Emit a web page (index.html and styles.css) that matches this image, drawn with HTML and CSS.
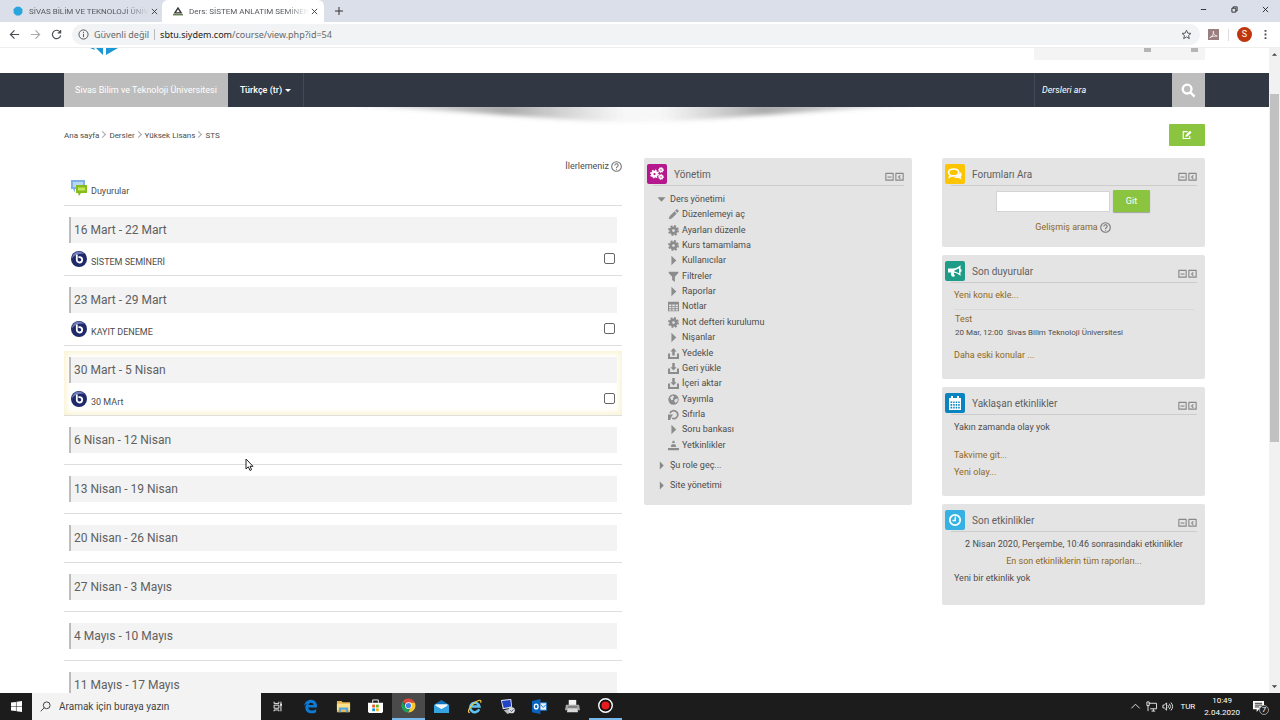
FILE: index.html
```html
<!DOCTYPE html>
<html lang="tr">
<head>
  <meta charset="UTF-8" />
  <meta name="viewport" content="width=device-width, initial-scale=1.0" />
  <title>Ders: SİSTEM ANLATIM SEMİNERİ</title>
  <link rel="stylesheet" href="styles.css">
</head>

<body>
<!-- Shared icons -->
<svg class="sprite" aria-hidden="true">
  <symbol id="i-gear" viewBox="0 0 16 16">
    <circle cx="8" cy="8" r="4" fill="none" stroke="currentColor" stroke-width="4"/>
    <circle cx="8" cy="8" r="6.6" fill="none" stroke="currentColor" stroke-width="2.6" stroke-dasharray="2.8 2.384"/>
  </symbol>
  <symbol id="i-pencil" viewBox="0 0 16 16"><path fill="currentColor" d="M1 15l1.300-4.500L9.500 3.300l3.200 3.200L5.500 13.700zM10.400 2.400L12 .8c.5-.5 1.200-.5 1.700 0L15.200 2.300c.5.5.5 1.200 0 1.700l-1.600 1.600z"/></symbol>
  <symbol id="i-right" viewBox="0 0 16 16"><path fill="currentColor" d="M5 1v14l7-7z"/></symbol>
  <symbol id="i-down" viewBox="0 0 16 16"><path fill="currentColor" d="M1 4h14l-7 8z"/></symbol>
  <symbol id="i-filter" viewBox="0 0 16 16"><path fill="currentColor" d="M1 1h14v2L10 8.500V16l-4-3V8.500L1 3z"/></symbol>
  <symbol id="i-table" viewBox="0 0 16 16"><path fill="currentColor" fill-rule="evenodd" d="M0 1h16v14H0zM1.500 5v2.300H5V5zm4.700 0v2.300h3.600V5zM11 5v2.300h3.500V5zM1.500 8.500v2.200H5V8.500zm4.700 0v2.200h3.600V8.500zm4.800 0v2.200h3.500V8.500zM1.500 11.900v1.800H5v-1.800zm4.700 0v1.800h3.600v-1.800zm4.800 0v1.800h3.500v-1.800z"/></symbol>
  <symbol id="i-upload" viewBox="0 0 16 16"><path fill="currentColor" d="M8 0l4.500 5H9.800v6H6.200V5H3.500zM0 8h3v5h10V8h3v8H0z"/></symbol>
  <symbol id="i-download" viewBox="0 0 16 16"><path fill="currentColor" d="M8 11L3.500 6h2.700V0h3.600v6h2.700zM0 8h3v5h10V8h3v8H0z"/></symbol>
  <symbol id="i-globe" viewBox="0 0 16 16"><circle cx="8" cy="8" r="7.500" fill="currentColor"/><path fill="#e4e4e4" d="M3 5l4-3 2 2-2 2 1 2-3 1zM10 8l4-2v4l-3 3-2-3z"/></symbol>
  <symbol id="i-reset" viewBox="0 0 16 16"><path fill="none" stroke="currentColor" stroke-width="2.500" d="M3 6a5.800 5.800 0 1 1 3 7.500"/><path fill="currentColor" d="M0 8h7.500L5.500 10.500 3 16H0z"/></symbol>
  <symbol id="i-cone" viewBox="0 0 16 16"><path fill="currentColor" d="M7 1h2l1.200 3.500H5.800zM5.300 6h5.400l1.300 4H4zM0 11.500h16V15H0z"/></symbol>
  <symbol id="i-help" viewBox="0 0 16 16"><circle cx="8" cy="8" r="7" fill="none" stroke="currentColor" stroke-width="1.600"/><path d="M5.600 6.400a2.400 2.400 0 1 1 3.600 2c-.9.500-1.200.8-1.200 1.700M8 11.300v1.600" fill="none" stroke="currentColor" stroke-width="1.600"/></symbol>
  <symbol id="i-hide" viewBox="0 0 16 16"><path d="M1 2.500h14M1.500 2v12.500h13V2" fill="none" stroke="currentColor" stroke-width="2"/><path d="M4.500 9h7" stroke="currentColor" stroke-width="2"/></symbol>
  <symbol id="i-dock" viewBox="0 0 16 16"><path d="M1 2.500h14M1.500 2v12.500h13V2" fill="none" stroke="currentColor" stroke-width="2"/><path d="M9.500 6L6.500 9l3 3" fill="none" stroke="currentColor" stroke-width="2"/></symbol>
  <symbol id="i-bbb" viewBox="0 0 16 16">
    <circle cx="8" cy="8" r="8" fill="#1f2a6b"/><path fill="#6f7db8" d="M8 .6A7.400 7.400 0 0 0 .8 8C3 3.500 9 2 13.500 3.200A7.400 7.400 0 0 0 8 .6z"/>
    <path d="M5.800 3.600v5.200a2.700 2.700 0 1 0 2.700-2.700H7.400" fill="none" stroke="#fff" stroke-width="1.800"/>
  </symbol>
</svg>

<div class="browser">
  <header class="tabs">
    <div class="tab">
      <svg class="favicon" viewBox="0 0 16 16"><path fill="#27a5dc" d="M5 1h6l4 4v6l-4 4H5l-4-4V5z"/></svg>
      <span class="tab-title">SİVAS BİLİM VE TEKNOLOJİ ÜNİV</span>
      <button class="tab-close" aria-label="Kapat"><svg viewBox="0 0 8 8"><path d="M1 1l6 6M7 1L1 7"/></svg></button>
    </div>
    <div class="tab tab-active">
      <svg class="favicon" viewBox="0 0 16 16"><path fill="#333" d="M8 1l7 11H1zM8 5L5 10h6z" fill-rule="evenodd"/><path fill="#4c6b3a" d="M0 13h16v2H0z"/></svg>
      <span class="tab-title">Ders: SİSTEM ANLATIM SEMİNER</span>
      <button class="tab-close" aria-label="Kapat"><svg viewBox="0 0 8 8"><path d="M1 1l6 6M7 1L1 7"/></svg></button>
    </div>
    <button class="new-tab" aria-label="Yeni sekme"><svg viewBox="0 0 8 8"><path d="M4 0v8M0 4h8"/></svg></button>
    <div class="window-buttons">
      <button aria-label="Küçült"><svg viewBox="0 0 8 8"><path d="M1 4h6"/></svg></button>
      <button aria-label="Geri yükle"><svg viewBox="0 0 8 8"><path d="M1 2.500h4.500V7H1zM2.500 2.500V1H7v4.500H5.500"/></svg></button>
      <button aria-label="Kapat"><svg viewBox="0 0 8 8"><path d="M1 1l6 6M7 1L1 7"/></svg></button>
    </div>
  </header>

  <div class="toolbar">
    <button class="tool" aria-label="Geri"><svg viewBox="0 0 12 12"><path d="M11 6H2M6 1.500L1.500 6 6 10.500"/></svg></button>
    <button class="tool tool-off" aria-label="İleri"><svg viewBox="0 0 12 12"><path d="M1 6h9M6 1.500L10.500 6 6 10.500"/></svg></button>
    <button class="tool" aria-label="Yenile"><svg viewBox="0 0 12 12"><path d="M10 3.500A4.600 4.600 0 1 0 10.600 7M10.500 1v3.200H7.300"/></svg></button>
    <div class="address">
      <svg class="info" viewBox="0 0 12 12"><circle cx="6" cy="6" r="5"/><path d="M6 5.300v3.500M6 3v1.300"/></svg>
      <span class="insecure">Güvenli değil</span>
      <span class="url"><b>sbtu.siydem.com</b>/course/view.php?id=54</span>
      <svg class="star" viewBox="0 0 12 12"><path d="M6 1.300l1.400 3.200 3.500.3-2.700 2.300.9 3.400L6 8.700l-3.100 1.800.9-3.400L1.100 4.800l3.500-.3z"/></svg>
    </div>
    <svg class="pdf" viewBox="0 0 12 12"><path fill="#9a7f80" d="M0 0h12v12H0z"/><path d="M2 9.500C5 8 6.500 5 5.800 2.500c-.5 3 2 5 4.200 5.300C7 7.500 4 8 2 9.500z" fill="none" stroke="#f4eaea"/></svg>
    <span class="divider"></span>
    <button class="avatar">S</button>
    <button class="tool menu" aria-label="Menü"><svg viewBox="0 0 12 12"><path fill="currentColor" stroke="none" d="M5 1h2v2H5zM5 5h2v2H5zM5 9h2v2H5z"/></svg></button>
  </div>

  <div class="viewport">
    <div class="page">
      <div class="banner">
        <svg class="logo" viewBox="0 0 30 8"><path fill="#1c97d5" d="M0 0h4l1 2zM6 0h7v7zM16 0h12L16 7z"/></svg>
        <div class="login-box"><i></i><i></i></div>
      </div>

      <nav class="navbar">
        <a class="brand" href="#">Sivas Bilim ve Teknoloji Üniversitesi</a>
        <a class="lang" href="#">Türkçe (tr) <span class="caret"></span></a>
        <form class="course-search">
          <input type="text" placeholder="Dersleri ara" aria-label="Dersleri ara">
          <button type="button" aria-label="Ara"><svg viewBox="0 0 16 16"><circle cx="6.500" cy="6.500" r="4.700"/><path d="M10 10l4.500 4.500"/></svg></button>
        </form>
        <svg class="nav-shadow" viewBox="0 0 560 24" preserveAspectRatio="none">
          <defs>
            <linearGradient id="lobes">
              <stop offset="0" stop-color="#555" stop-opacity=".1"/><stop offset=".27" stop-color="#555" stop-opacity=".5"/>
              <stop offset=".48" stop-color="#777" stop-opacity=".06"/><stop offset=".55" stop-color="#777" stop-opacity=".06"/>
              <stop offset=".73" stop-color="#555" stop-opacity=".5"/><stop offset="1" stop-color="#555" stop-opacity=".1"/>
            </linearGradient>
            <filter id="soft"><feGaussianBlur stdDeviation="6 2"/></filter>
          </defs>
          <path fill="url(#lobes)" filter="url(#soft)" d="M0-4v3C90 2 180 12 280 16 380 12 470 2 560-1v-3z"/>
        </svg>
      </nav>

      <div class="crumb-row">
        <nav class="breadcrumb">
          <a href="#">Ana sayfa</a><a href="#">Dersler</a><a href="#">Yüksek Lisans</a><a href="#">STS</a>
        </nav>
        <button class="edit" aria-label="Düzenlemeyi aç"><svg viewBox="0 0 16 16"><path fill="none" stroke="#fff" stroke-width="1.800" d="M9 2.500H2v11h10.500V9.500"/><path fill="#fff" d="M5.500 11l.6-3.200 6.600-6.600 2.600 2.600-6.600 6.600z"/></svg></button>
      </div>

      <div class="columns">
        <!-- Course weeks -->
        <main class="course">
          <div class="general">
            <div class="progress">İlerlemeniz<svg class="help"><use href="#i-help"/></svg></div>
            <a class="activity" href="#">
              <svg class="activity-icon" viewBox="0 0 16 16"><path fill="#7fb0e6" d="M0 0h14v9H4v3.500L2 9H0z"/><path fill="#b9d6f5" d="M2 2h10v5H2z"/><path fill="#86bd1c" d="M5 5h11v8h-6l-2 3-1-3H5z"/><path fill="#c5e65b" d="M7 7.500h7v3H7z"/></svg>
              <span>Duyurular</span>
            </a>
          </div>

          <section class="week">
            <h3>16 Mart - 22 Mart</h3>
            <div class="activity-row">
              <a class="activity" href="#"><svg class="activity-icon"><use href="#i-bbb"/></svg><span>SİSTEM SEMİNERİ</span></a>
              <input type="checkbox" aria-label="SİSTEM SEMİNERİ tamamlandı">
            </div>
          </section>
          <section class="week">
            <h3>23 Mart - 29 Mart</h3>
            <div class="activity-row">
              <a class="activity" href="#"><svg class="activity-icon"><use href="#i-bbb"/></svg><span>KAYIT DENEME</span></a>
              <input type="checkbox" aria-label="KAYIT DENEME tamamlandı">
            </div>
          </section>
          <section class="week week-current">
            <h3>30 Mart - 5 Nisan</h3>
            <div class="activity-row">
              <a class="activity" href="#"><svg class="activity-icon"><use href="#i-bbb"/></svg><span>30 MArt</span></a>
              <input type="checkbox" aria-label="30 MArt tamamlandı">
            </div>
          </section>
          <section class="week week-empty"><h3>6 Nisan - 12 Nisan</h3></section>
          <section class="week week-empty"><h3>13 Nisan - 19 Nisan</h3></section>
          <section class="week week-empty"><h3>20 Nisan - 26 Nisan</h3></section>
          <section class="week week-empty"><h3>27 Nisan - 3 Mayıs</h3></section>
          <section class="week week-empty"><h3>4 Mayıs - 10 Mayıs</h3></section>
          <section class="week week-empty"><h3>11 Mayıs - 17 Mayıs</h3></section>
        </main>

        <!-- Administration -->
        <aside class="side">
          <section class="block block-admin">
            <header class="block-head">
              <svg class="badge magenta" viewBox="0 0 20 20"><g color="#fff"><use href="#i-gear" x="3" y="5" width="9" height="10"/><use href="#i-gear" x="11" y="3" width="6" height="6"/><use href="#i-gear" x="11" y="10" width="6" height="6"/></g></svg>
              <h2>Yönetim</h2>
              <button aria-label="Gizle"><svg><use href="#i-hide"/></svg></button><button aria-label="Yerleştir"><svg><use href="#i-dock"/></svg></button>
            </header>
            <div class="node"><svg><use href="#i-down"/></svg>Ders yönetimi</div>
            <ul class="tree">
              <li><svg><use href="#i-pencil"/></svg><a href="#">Düzenlemeyi aç</a></li>
              <li><svg><use href="#i-gear"/></svg><a href="#">Ayarları düzenle</a></li>
              <li><svg><use href="#i-gear"/></svg><a href="#">Kurs tamamlama</a></li>
              <li><svg><use href="#i-right"/></svg><a href="#">Kullanıcılar</a></li>
              <li><svg><use href="#i-filter"/></svg><a href="#">Filtreler</a></li>
              <li><svg><use href="#i-right"/></svg><a href="#">Raporlar</a></li>
              <li><svg><use href="#i-table"/></svg><a href="#">Notlar</a></li>
              <li><svg><use href="#i-gear"/></svg><a href="#">Not defteri kurulumu</a></li>
              <li><svg><use href="#i-right"/></svg><a href="#">Nişanlar</a></li>
              <li><svg><use href="#i-upload"/></svg><a href="#">Yedekle</a></li>
              <li><svg><use href="#i-download"/></svg><a href="#">Geri yükle</a></li>
              <li><svg><use href="#i-download"/></svg><a href="#">İçeri aktar</a></li>
              <li><svg><use href="#i-globe"/></svg><a href="#">Yayımla</a></li>
              <li><svg><use href="#i-reset"/></svg><a href="#">Sıfırla</a></li>
              <li><svg><use href="#i-right"/></svg><a href="#">Soru bankası</a></li>
              <li><svg><use href="#i-cone"/></svg><a href="#">Yetkinlikler</a></li>
            </ul>
            <div class="node"><svg><use href="#i-right"/></svg>Şu role geç...</div>
            <div class="node"><svg><use href="#i-right"/></svg>Site yönetimi</div>
          </section>
        </aside>

        <!-- Forum, news and events -->
        <aside class="side">
          <section class="block block-search">
            <header class="block-head">
              <svg class="badge yellow" viewBox="0 0 20 20"><path fill="none" stroke="#fff" stroke-width="1.600" d="M8.500 5C5.500 5 3.500 6.500 3.500 8.500c0 1.200.7 2 1.700 2.700L4.500 13l2.700-1.200c4 .5 6.500-1 6.500-3.300S11.500 5 8.500 5z"/><path fill="#fff" d="M14.800 8c2 .8 2.700 3.500.7 5l1.200 2.500-3.200-1.500c-2 .3-4-.2-5-1.200 3.500 0 6.300-1.800 6.300-4.800z"/></svg>
              <h2>Forumları Ara</h2>
              <button aria-label="Gizle"><svg><use href="#i-hide"/></svg></button><button aria-label="Yerleştir"><svg><use href="#i-dock"/></svg></button>
            </header>
            <form class="forum-search">
              <input type="text" aria-label="Forumlarda ara">
              <button type="button">Git</button>
            </form>
            <p class="advanced"><a href="#">Gelişmiş arama</a><svg class="help"><use href="#i-help"/></svg></p>
          </section>

          <section class="block">
            <header class="block-head">
              <svg class="badge teal" viewBox="0 0 20 20"><path fill="#fff" fill-rule="evenodd" d="M3 7.500h5c3 0 5.500-1.500 7.500-3.500v4c1.500 0 1.500 3 0 3v4c-2-2-4-3-6.500-3.300-.5 1 .5 2 1 3.300-1 1-2.800.8-3.500 0-.6-1.200-.8-2.300-.5-3.500H3zM14 7.200c-1.500 1-3 1.800-4.500 2v1.300c1.500.3 3 .8 4.500 1.800z"/></svg>
              <h2>Son duyurular</h2>
              <button aria-label="Gizle"><svg><use href="#i-hide"/></svg></button><button aria-label="Yerleştir"><svg><use href="#i-dock"/></svg></button>
            </header>
            <div class="block-body">
              <p><a href="#">Yeni konu ekle...</a></p>
              <div class="post">
                <a href="#">Test</a>
                <div class="post-info"><span>20 Mar, 12:00</span><span>Sivas Bilim Teknoloji Üniversitesi</span></div>
              </div>
              <p class="older"><a href="#">Daha eski konular ...</a></p>
            </div>
          </section>

          <section class="block">
            <header class="block-head">
              <svg class="badge blue" viewBox="0 0 20 20"><path fill="#fff" fill-rule="evenodd" d="M4 5h2V3h2v2h4V3h2v2h2v12H4zM5.500 8.500v1.600h1.700V8.500zm2.700 0v1.600h1.500V8.500zm2.500 0v1.600h1.500V8.500zm2.500 0v1.600h1.500V8.500zM5.500 11v1.700h1.700V11zm2.700 0v1.700h1.500V11zm2.500 0v1.700h1.500V11zm2.500 0v1.700h1.500V11zM5.500 13.700v1.700h1.700v-1.700zm2.700 0v1.700h1.500v-1.700zm2.500 0v1.700h1.500v-1.700zm2.500 0v1.700h1.500v-1.700z"/></svg>
              <h2>Yaklaşan etkinlikler</h2>
              <button aria-label="Gizle"><svg><use href="#i-hide"/></svg></button><button aria-label="Yerleştir"><svg><use href="#i-dock"/></svg></button>
            </header>
            <div class="block-body">
              <p>Yakın zamanda olay yok</p>
              <p class="calendar"><a href="#">Takvime git...</a></p>
              <p><a href="#">Yeni olay...</a></p>
            </div>
          </section>

          <section class="block block-recent">
            <header class="block-head">
              <svg class="badge sky" viewBox="0 0 20 20"><circle cx="10" cy="10" r="5.200" fill="none" stroke="#fff" stroke-width="1.800"/><path d="M10.300 6.500V10.500H7.500" fill="none" stroke="#fff" stroke-width="1.400"/></svg>
              <h2>Son etkinlikler</h2>
              <button aria-label="Gizle"><svg><use href="#i-hide"/></svg></button><button aria-label="Yerleştir"><svg><use href="#i-dock"/></svg></button>
            </header>
            <div class="block-body">
              <p class="centered">2 Nisan 2020, Perşembe, 10:46 sonrasındaki etkinlikler</p>
              <p class="centered"><a href="#">En son etkinliklerin tüm raporları...</a></p>
              <p>Yeni bir etkinlik yok</p>
            </div>
          </section>
        </aside>
      </div>
    </div>

    <div class="scrollbar">
      <svg viewBox="0 0 8 8"><path d="M1 6l3-3 3 3z"/></svg>
      <div class="track"><div class="thumb"></div></div>
      <svg viewBox="0 0 8 8"><path d="M1 2l3 3 3-3z"/></svg>
    </div>
  </div>
</div>

<footer class="taskbar">
  <button class="start" aria-label="Başlat"><svg viewBox="0 0 12 12"><path fill="#fff" d="M0 1.700L5.400 1v4.700H0zM6 .9L12 0v5.700H6zM0 6.300h5.400V11L0 10.300zM6 6.300h6V12l-6-.9z"/></svg></button>
  <label class="task-search">
    <svg viewBox="0 0 12 12"><circle cx="7.300" cy="4.700" r="3.700"/><path d="M4.700 7.300L.8 11.200"/></svg>
    <input type="text" placeholder="Aramak için buraya yazın">
  </label>
  <div class="apps">
    <button aria-label="Görev görünümü"><svg viewBox="0 0 16 16"><path fill="none" stroke="#eee" stroke-width="1.400" d="M3 1v2.500h7V1M3 6h7v4.500H3zM3 15v-2h7v2M13 1v14"/><path fill="#eee" d="M12 4h2.500v3H12z"/></svg></button>
    <button aria-label="Edge"><svg viewBox="0 0 16 16"><path fill="#0d7bd6" d="M1 7.500C2 3 5 .8 8.500.8c4.200 0 6.700 3 6.500 8.200H5.500c.2 3.500 5 4.300 8.500 2v3c-4.500 2.500-11.500 1.500-11.500-5 0-2 1-3.500 2.500-4.500-1.500.5-3 1.500-4 3zM5.800 6.500h5.400C11.200 3 6.200 3 5.800 6.500z"/></svg></button>
    <button aria-label="Dosya Gezgini"><svg viewBox="0 0 16 16"><path fill="#e8b64c" d="M1 2h5l1 1.500h8V14H1z"/><path fill="#fbe08e" d="M1 5h14v7H1z"/><path fill="#59a5d8" d="M3 9h10v5h-2.500v-2.500h-5V14H3z"/></svg></button>
    <button aria-label="Store"><svg viewBox="0 0 16 16"><path fill="none" stroke="#fff" d="M5 4V1h6v3"/><path fill="#fff" d="M0 4h16v9l-1 2H1l-1-2z"/><path fill="#e8532b" d="M4.500 6h3v3h-3z"/><path fill="#6eb11b" d="M8.500 6h3v3h-3z"/><path fill="#1296dc" d="M4.500 10h3v3h-3z"/><path fill="#f6b21b" d="M8.500 10h3v3h-3z"/></svg></button>
    <button class="running current" aria-label="Chrome"><svg viewBox="0 0 16 16"><path fill="#dd4a3c" d="M8 8L1.500 4A7.500 7.500 0 0 1 14.800 5z"/><path fill="#f9c930" d="M8 5h6.800A7.500 7.500 0 0 1 7.500 15.500L11 9z"/><path fill="#1f9f5c" d="M1.500 4L5 9.500 9 11l-1.500 4.500A7.500 7.500 0 0 1 1.500 4z"/><circle cx="8" cy="8" r="3.600" fill="#fff"/><circle cx="8" cy="8" r="2.800" fill="#4583ea"/></svg></button>
    <button aria-label="Posta"><svg viewBox="0 0 16 16"><path fill="#1273bd" d="M0 6l8-5 8 5v9H0z"/><path fill="#f4f8fb" d="M1.500 5.500h13V8L8 11 1.500 8z"/><path fill="#34a3e4" d="M0 6l8 5 8-5v9H0z"/></svg></button>
    <button aria-label="Internet Explorer"><svg viewBox="0 0 16 16"><path fill="none" stroke="#5fc4f2" stroke-width="2.600" d="M13 11A5 5 0 1 1 13.300 8H4"/><path fill="none" stroke="#f2c443" stroke-width="1.300" d="M3 14.500c-4 0 1-8 6.500-11.500C13 .8 15.800.6 14.500 4"/></svg></button>
    <button aria-label="Uzak Masaüstü"><svg viewBox="0 0 16 16"><path fill="#dce4f2" d="M1 1l11-1 1 9-10 2z"/><path fill="#2443c4" d="M2 2l9-1 1 7-8 1.500z"/><path fill="#b9bec4" d="M4 12l8-2 3 3-7 3z"/><circle cx="12.500" cy="12" r="3.300" fill="#d9dde0"/><path d="M11 12l1.300 1.400L14.300 11" fill="none" stroke="#557"/></svg></button>
    <button aria-label="Outlook"><svg viewBox="0 0 16 16"><path fill="#e8f1fa" stroke="#1573c8" d="M8 4h7.500v8H8z"/><path d="M9 6l3 3 3-3" fill="none" stroke="#1573c8"/><path fill="#0a64bd" d="M0 2l9-2v16l-9-2z"/><ellipse cx="4.500" cy="8" rx="2" ry="2.600" fill="none" stroke="#fff" stroke-width="1.400"/></svg></button>
    <button aria-label="Yazıcı"><svg viewBox="0 0 16 16"><path fill="#f3f3f3" d="M4 1h8v6H4z"/><path fill="#a8a8a8" d="M1 6h14l1 6H0z"/><path fill="#d8d8d8" d="M3 10h10l1 4H2z"/><path fill="#555" d="M3 8h10v1H3z"/></svg></button>
    <button class="running" aria-label="Kayıt"><svg viewBox="0 0 16 16"><circle cx="8" cy="8" r="7.200" fill="#111" stroke="#fff" stroke-width="1.500"/><circle cx="8" cy="8" r="4.300" fill="#e81c1c"/></svg></button>
  </div>
  <div class="tray">
    <svg viewBox="0 0 12 12"><path d="M1.500 8L6 3.500 10.500 8"/></svg>
    <svg viewBox="0 0 12 12"><path d="M3 2.500h8.500v6H4.500M1 1v4h2.500V1zM2.200 5v6M6 11h4M8 8.500V11"/></svg>
    <svg viewBox="0 0 12 12"><path d="M1 4.500h1.500L5 2v8L2.500 7.500H1zM6.500 4.500a2.500 2.500 0 0 1 0 3M8 3a4.500 4.500 0 0 1 0 6M9.700 1.700a6.500 6.500 0 0 1 0 8.600"/></svg>
    <span class="keyboard">TUR</span>
    <time class="clock">10:49<br>2.04.2020</time>
    <button class="notifications" aria-label="Bildirimler">
      <svg viewBox="0 0 12 12"><path fill="#fff" stroke="none" d="M0 0h12v9H6.500L4 12V9H0z"/><path stroke="#222" d="M2 2.500h8M2 4.500h8M2 6.500h5"/></svg>
      <span>7</span>
    </button>
  </div>
</footer>

<svg class="cursor" viewBox="0 0 9 14"><path d="M1 1v10l2.300-2.200L5 12.500l1.600-.8L5 8.300h3z" fill="#fff" stroke="#222"/></svg>
</body>
</html>
```
FILE: styles.css
```css
* {
  box-sizing: border-box;
}

body {
  margin: 0;
  height: 100vh;
  display: flex;
  flex-direction: column;
  overflow: hidden;
  background-color: #ffffff;
  color: #4c4c4c;
  font-family: Roboto, "Noto Sans", sans-serif;
  font-size: 9px;
  line-height: 15px;
}

h2,
h3,
p,
ul {
  margin: 0;
  padding: 0;
  font-weight: normal;
}

a {
  color: inherit;
  text-decoration: none;
}

button {
  display: flex;
  align-items: center;
  justify-content: center;
  padding: 0;
  border: none;
  background: none;
  color: inherit;
  font: inherit;
  cursor: pointer;
}

input {
  font: inherit;
}

svg {
  flex: none;
  overflow: visible;
}

.sprite {
  position: absolute;
  width: 0;
  height: 0;
}

/* Browser window */
.browser {
  flex: 1;
  min-height: 0;
  display: flex;
  flex-direction: column;
}

.tabs {
  flex: none;
  display: flex;
  height: 22px;
  background-color: #dbdfe9;
}

.tab {
  display: flex;
  align-items: center;
  gap: 6px;
  width: 162px;
  padding: 0 2px 0 13px;
  color: #55585e;
  font-size: 8px;
}

.tab-active {
  padding: 0 5px 0 11px;
  border-radius: 6px 6px 0 0;
  background-color: #ffffff;
}

.favicon {
  width: 10px;
  height: 10px;
}

.tab-title {
  flex: 1;
  margin-right: -5px;
  white-space: nowrap;
  -webkit-mask-image: linear-gradient(to left, transparent, #000 24px);
  mask-image: linear-gradient(to left, transparent, #000 24px);
}

.tab-close,
.new-tab {
  width: 12px;
  color: #333333;
}

.tab-close svg,
.new-tab svg,
.window-buttons svg {
  width: 7px;
  height: 7px;
  fill: none;
  stroke: currentColor;
}

.new-tab {
  width: 30px;
}

.new-tab svg {
  width: 8px;
  height: 8px;
}

.window-buttons {
  display: flex;
  gap: 11px;
  margin-left: auto;
  padding: 0 5px 4px 0;
  color: #222222;
}

.window-buttons button {
  width: 20px;
}

.toolbar {
  flex: none;
  display: flex;
  align-items: center;
  height: 26px;
  padding: 0 4px;
  border-bottom: 1px solid #eeeeee;
}

.tool {
  width: 21px;
  color: #4a4d51;
}

.tool svg {
  width: 11px;
  height: 11px;
  fill: none;
  stroke: currentColor;
  stroke-width: 1.3;
}

.tool-off {
  color: #aaaaaa;
}

.address {
  flex: 1;
  display: flex;
  align-items: center;
  height: 21px;
  margin-left: 5px;
  padding: 0 8px 0 6px;
  border-radius: 11px;
  background-color: #f1f3f4;
  font-family: "Noto Sans", "Open Sans", sans-serif;
}

.info,
.star {
  width: 11px;
  height: 11px;
  fill: none;
  stroke: #4a4d51;
}

.insecure {
  margin: 0 5px 0 5px;
  padding-right: 5px;
  border-right: 1px solid #bbbbbb;
  line-height: 11px;
  color: #66696d;
}

.url {
  color: #66696d;
}

.url b {
  font-weight: normal;
  color: #222222;
}

.star {
  margin-left: auto;
}

.pdf {
  width: 11px;
  height: 11px;
  margin-left: 8px;
}

.divider {
  width: 1px;
  height: 12px;
  margin: 0 8px 0 9px;
  background-color: #dddddd;
}

.avatar {
  width: 15px;
  height: 15px;
  border-radius: 50%;
  background-color: #bf360c;
  color: #ffffff;
}

.menu {
  margin-left: 3px;
}

.viewport {
  flex: 1;
  min-height: 0;
  display: flex;
}

.page {
  flex: 1;
  overflow: hidden;
}

.scrollbar {
  display: flex;
  flex-direction: column;
  align-items: center;
  width: 11px;
  padding: 2px 0;
  background-color: #f1f1f1;
}

.scrollbar svg {
  width: 7px;
  height: 8px;
  fill: #444444;
}

.track {
  flex: 1;
  width: 9px;
  padding-top: 36px;
}

.thumb {
  height: 59%;
  background-color: #c1c1c1;
}

/* Site header */
.banner {
  display: flex;
  justify-content: space-between;
  align-items: flex-start;
  height: 25px;
  padding: 0 64px 0 90px;
}

.logo {
  width: 30px;
  height: 8px;
}

.login-box {
  display: flex;
  justify-content: flex-end;
  gap: 40px;
  width: 171px;
  height: 12px;
  padding-right: 7px;
  background-color: #f4f4f4;
}

.login-box i {
  width: 7px;
  height: 4px;
  background-color: #b5b5b5;
}

.navbar {
  position: relative;
  display: flex;
  height: 34px;
  padding: 0 64px;
  background-color: #313743;
  color: #ffffff;
  line-height: 34px;
}

.brand {
  width: 164px;
  background-color: #bdbdbd;
  text-align: center;
}

.lang {
  padding: 0 12px;
  border-right: 1px solid #434956;
  font-weight: 500;
}

.caret {
  display: inline-block;
  margin-left: 1px;
  border: 3px solid transparent;
  border-top-color: #ffffff;
  border-bottom: 0;
  vertical-align: middle;
}

.course-search {
  display: flex;
  width: 171px;
  margin-left: auto;
}

.course-search input {
  flex: 1;
  min-width: 0;
  padding: 0 7px;
  border: none;
  border-left: 1px solid #434956;
  background: none;
  font-style: italic;
}

.course-search input::placeholder {
  color: #ffffff;
  opacity: 1;
}

.course-search button {
  width: 33px;
  background-color: #bdbdbd;
}

.course-search svg {
  width: 15px;
  height: 15px;
  fill: none;
  stroke: #ffffff;
  stroke-width: 2.5;
}

/* Curved shadow hanging under the bar */
.nav-shadow {
  position: absolute;
  top: 100%;
  left: 28%;
  width: 44%;
  height: 24px;
  overflow: hidden;
}

.crumb-row {
  display: flex;
  justify-content: space-between;
  align-items: center;
  padding: 17px 64px 12px;
}

.breadcrumb {
  display: flex;
  font-size: 8px;
}

.breadcrumb a + a::before {
  content: "";
  display: inline-block;
  width: 4px;
  height: 4px;
  margin: 0 4px 1px 1px;
  border: 1px solid #aaaaaa;
  border-width: 1px 1px 0 0;
  transform: rotate(45deg);
}

.edit {
  width: 36px;
  height: 22px;
  border-radius: 1px;
  background-color: #8bc53f;
}

.edit svg {
  width: 10px;
  height: 10px;
}

.columns {
  display: grid;
  grid-template-columns: 558fr 290fr 293fr;
  align-items: start;
  padding: 0 64px;
}

.side {
  padding-left: 22px;
}

.side + .side {
  padding-left: 30px;
}

/* Course weeks */
.general,
.week {
  border-bottom: 1px solid #dedede;
}

.general {
  height: 48px;
}

.progress {
  display: flex;
  align-items: center;
  justify-content: flex-end;
  gap: 2px;
  height: 17px;
}

.help {
  width: 11px;
  height: 11px;
  color: #777777;
}

.activity {
  display: flex;
  align-items: flex-start;
  gap: 4px;
}

.general .activity {
  padding: 5px 7px 0;
}

.activity-icon {
  width: 16px;
  height: 16px;
}

.activity span {
  padding-top: 4px;
}

.week {
  padding: 11px 5px 0;
}

.week h3 {
  height: 26px;
  padding-left: 3px;
  border-left: 2px solid #bdbdbd;
  background-color: #f3f3f3;
  color: #606060;
  font-size: 12px;
  line-height: 26px;
}

.week-empty {
  padding-bottom: 11px;
}

.week-current {
  margin-top: 5px;
  padding-top: 6px;
  box-shadow: inset 0 0 5px 3px #faf5d7;
}

.activity-row {
  display: flex;
  justify-content: space-between;
  align-items: flex-start;
  height: 32px;
  padding: 8px 2px 0;
}

.activity-row input {
  appearance: none;
  width: 11px;
  height: 11px;
  margin: 2px 0 0;
  border: 1px solid #666666;
  border-radius: 2px;
  background-color: #ffffff;
}

/* Blocks */
.block {
  margin-bottom: 8px;
  padding: 4px 8px 15px 3px;
  border-radius: 2px;
  background-color: #e4e4e4;
}

.block-admin {
  padding-bottom: 10px;
}

.block-search {
  padding-bottom: 12px;
}

.block-recent {
  padding-bottom: 18px;
}

.block-head {
  display: flex;
  align-items: center;
  height: 24px;
  margin-bottom: 4px;
  background-image: linear-gradient(#cccccc, #cccccc);
  background-position: 6px 100%;
  background-repeat: no-repeat;
  background-size: 100% 1px;
}

.block-admin .block-head {
  margin-bottom: 6px;
}

.block-head h2 {
  flex: 1;
  margin-left: 7px;
  color: #606060;
  font-size: 10px;
}

.block-head button {
  width: 10px;
  margin-top: 4px;
  color: #888888;
}

.block-head button svg {
  width: 9px;
  height: 9px;
}

.badge {
  width: 20px;
  height: 20px;
  border-radius: 2px;
}

.magenta {
  background-color: #b5178c;
}

.yellow {
  background-color: #fdc500;
}

.teal {
  background-color: #1f9c87;
}

.blue {
  background-color: #0a84c1;
}

.sky {
  background-color: #35b2e3;
}

.node {
  display: flex;
  align-items: center;
  gap: 4px;
  height: 15px;
  padding-left: 10px;
}

.node svg {
  width: 9px;
  height: 9px;
  color: #888888;
}

.node + .node,
.tree + .node {
  height: 20px;
}

.tree {
  display: grid;
  grid-auto-rows: 1fr;
  min-height: 246px;
  margin-bottom: 2px;
  padding-left: 21px;
  list-style: none;
}

.tree li {
  display: flex;
  align-items: center;
  gap: 3px;
}

.tree svg {
  width: 11px;
  height: 11px;
  color: #8c8c8c;
}

.forum-search {
  display: flex;
  justify-content: center;
  align-items: center;
  gap: 3px;
  padding-left: 4px;
}

.forum-search input {
  width: 114px;
  height: 21px;
  border: 1px solid #d4d4d4;
}

.forum-search button {
  width: 37px;
  height: 22px;
  border-radius: 1px;
  background-color: #8bc53f;
  box-shadow: 0 1px 1px #a0a0a0;
  color: #ffffff;
}

.advanced {
  display: flex;
  justify-content: center;
  align-items: center;
  gap: 2px;
  padding: 8px 0 0 4px;
}

.block p a,
.post a {
  color: #8f671a;
}

.block-body {
  padding: 0 3px 0 9px;
}

.block-body p {
  line-height: 17px;
}

.post {
  margin-top: 5px;
  padding: 2px 1px 0;
  border-top: 1px solid #d9d9d9;
  line-height: 14px;
}

.post-info {
  display: flex;
  gap: 4px;
  font-size: 8px;
}

.block-body .older {
  margin-top: 7px;
}

.block-body .calendar {
  margin-top: 11px;
}

.centered {
  text-align: center;
}

/* Taskbar */
.taskbar {
  flex: none;
  display: flex;
  height: 27px;
  background-color: #1c1c1c;
  color: #ffffff;
}

.start {
  width: 32px;
}

.start svg {
  width: 11px;
  height: 11px;
}

.task-search {
  display: flex;
  align-items: center;
  gap: 8px;
  width: 229px;
  padding-left: 8px;
  background-color: #f3f3f3;
}

.task-search svg {
  width: 11px;
  height: 11px;
  fill: none;
  stroke: #333333;
}

.task-search input {
  flex: 1;
  min-width: 0;
  padding: 0;
  border: none;
  background: none;
  font-size: 10px;
}

.task-search input::placeholder {
  color: #444444;
  opacity: 1;
}

.apps {
  display: grid;
  grid-auto-flow: column;
  grid-auto-columns: 1fr;
  width: 361px;
}

.apps svg {
  width: 15px;
  height: 15px;
}

.apps button:first-child svg {
  width: 11px;
  height: 11px;
}

.running {
  border-bottom: 2px solid #76b9ed;
}

.current {
  background-color: #4a4a4a;
}

.tray {
  display: flex;
  align-items: center;
  gap: 5px;
  margin-left: auto;
  padding-right: 16px;
  font-size: 8px;
}

.tray svg {
  width: 11px;
  height: 11px;
  fill: none;
  stroke: #eeeeee;
}

.keyboard {
  margin-left: 2px;
}

.clock {
  margin: 0 8px 0 4px;
  line-height: 12px;
  text-align: center;
}

.notifications {
  position: relative;
}

.notifications span {
  position: absolute;
  left: 6px;
  top: 4px;
  width: 10px;
  height: 10px;
  border: 1px solid #999999;
  border-radius: 50%;
  background-color: #222222;
  font-size: 8px;
  line-height: 8px;
}

/* Mouse pointer, over the page */
.cursor {
  position: absolute;
  left: 245px;
  top: 458px;
  width: 9px;
  height: 14px;
}
```
